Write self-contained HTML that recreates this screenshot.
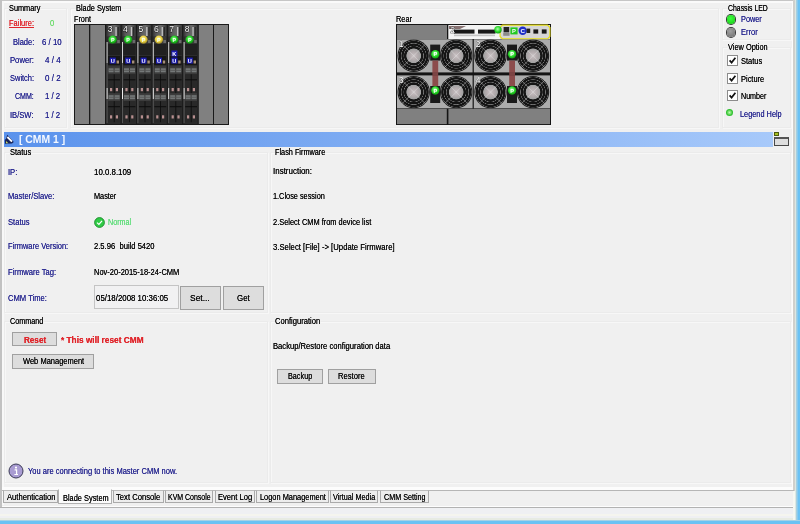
<!DOCTYPE html>
<html><head><meta charset="utf-8"><title>CMM 1</title>
<style>
html,body{margin:0;padding:0}
body{width:800px;height:524px;position:relative;overflow:hidden;background:#f0f0f0;font-family:"Liberation Sans",sans-serif;font-size:8.2px;letter-spacing:0;color:#0c0c0c;line-height:10px;}
.a{position:absolute;white-space:pre}
.t{position:absolute;white-space:pre;height:10px;line-height:10px;transform-origin:0 50%;text-shadow:0 0 0.25px}
.n{}
.b{color:#2c2c92}
.gb{position:absolute;box-sizing:border-box;border:1px solid #ebebeb;box-shadow:1px 1px 0 #f7f7f7, inset 1px 1px 0 #f7f7f7}
.btn{position:absolute;box-sizing:border-box;border:1px solid #a0a0a0;background:#dddddd;text-align:center;color:#1e1e1e}
.tab{position:absolute;box-sizing:border-box;top:490px;height:13px;border:1px solid #aaa;border-top-color:#bbb;background:#ededed;text-align:center;line-height:11px;color:#1e1e1e}
.cb{position:absolute;box-sizing:border-box;width:11px;height:11px;border:1px solid #8c8c8c;background:#fff}
</style></head><body>
<div class="a" style="left:0;top:0;width:800px;height:1.3px;background:#c6c6c6"></div>
<div class="a" style="left:0;top:0;width:2px;height:508px;background:#c2c2c2"></div>
<div class="a" style="left:2px;top:1.3px;width:791px;height:2px;background:#fafafa"></div>
<div class="a" style="left:2px;top:1px;width:2px;height:504px;background:#f8f8f8"></div>
<div class="a" style="left:0;top:508px;width:797px;height:13px;background:#eff0f3"></div>
<div class="a" style="left:0;top:514px;width:797px;height:1.6px;background:#f5f5ef"></div>
<div class="a" style="left:0;top:518.4px;width:797px;height:2.3px;background:#e7ebe3"></div>
<div class="a" style="left:0;top:507px;width:796px;height:1px;background:#b2b2b2"></div>
<div class="a" style="left:2px;top:505.5px;width:794px;height:1.5px;background:#fdfdfd"></div>
<div class="a" style="left:792px;top:1px;width:1.5px;height:489px;background:#fcfcfc"></div>
<div class="a" style="left:793px;top:0;width:2px;height:491px;background:#d0d0cc"></div>
<div class="a" style="left:793px;top:491px;width:2px;height:30px;background:#f6f8f2"></div>
<div class="a" style="left:795px;top:0;width:1px;height:521px;background:#dce8e3"></div>
<div class="a" style="left:796px;top:0;width:1px;height:524px;background:#a6cfe0"></div>
<div class="a" style="left:797px;top:0;width:1px;height:524px;background:#8acaee"></div>
<div class="a" style="left:798px;top:0;width:2px;height:524px;background:#6ac2f4"></div>
<div class="a" style="left:0;top:520px;width:800px;height:1px;background:#a6d2e6"></div>
<div class="a" style="left:0;top:521px;width:800px;height:3px;background:#6ac2f4"></div>
<div class="gb" style="left:4px;top:8px;width:63px;height:120px"></div>
<div class="gb" style="left:70px;top:8px;width:649px;height:120px"></div>
<div class="gb" style="left:722px;top:8px;width:69px;height:32px"></div>
<div class="gb" style="left:722px;top:47px;width:69px;height:81px"></div>
<div class="t " style="left:9px;top:3.5px;background:#f0f0f0;transform:scaleX(0.8935)">Summary</div>
<div class="t " style="left:8.5px;top:19.0px;color:#e0262c;text-decoration:underline;transform:scaleX(0.9153)">Failure:</div>
<div class="t n" style="left:50px;top:19.0px;color:#6fdc6f;transform:scaleX(0.93)">0</div>
<div class="t b" style="left:12.5px;top:38.0px;;transform:scaleX(0.9174)">Blade:</div>
<div class="t b" style="left:42.2px;top:38.0px;;transform:scaleX(0.961)">6 / 10</div>
<div class="t b" style="left:9.9px;top:56.0px;;transform:scaleX(0.9378)">Power:</div>
<div class="t b" style="left:44.6px;top:56.0px;;transform:scaleX(0.9788)">4 / 4</div>
<div class="t b" style="left:9.7px;top:74.0px;;transform:scaleX(0.9132)">Switch:</div>
<div class="t b" style="left:44.6px;top:74.0px;;transform:scaleX(0.9788)">0 / 2</div>
<div class="t b" style="left:15px;top:92.0px;;transform:scaleX(0.8613)">CMM:</div>
<div class="t b" style="left:45px;top:92.0px;;transform:scaleX(0.9537)">1 / 2</div>
<div class="t b" style="left:10.3px;top:111.0px;;transform:scaleX(0.9278)">IB/SW:</div>
<div class="t b" style="left:45px;top:111.0px;;transform:scaleX(0.9537)">1 / 2</div>
<div class="t " style="left:76px;top:3.5px;background:#f0f0f0;transform:scaleX(0.9007)">Blade System</div>
<div class="t " style="left:74px;top:15.0px;;transform:scaleX(0.8889)">Front</div>
<div class="t " style="left:395.5px;top:15.0px;;transform:scaleX(0.9014)">Rear</div>
<!-- FRONT -->
<svg width="155" height="101" viewBox="0 0 155 101" style="position:absolute;left:74px;top:24px;letter-spacing:0;will-change:transform" font-family="Liberation Sans, sans-serif"><defs><linearGradient id="bt" x1="0" x2="1"><stop offset="0" stop-color="#303030"/><stop offset=".25" stop-color="#585858"/><stop offset=".6" stop-color="#6a6a6a"/><stop offset="1" stop-color="#383838"/></linearGradient><radialGradient id="lg" cx=".45" cy=".4" r=".65"><stop offset="0" stop-color="#8dff8d"/><stop offset=".55" stop-color="#22c822"/><stop offset="1" stop-color="#0b6e0b"/></radialGradient><radialGradient id="ly" cx=".45" cy=".4" r=".65"><stop offset="0" stop-color="#fff8a8"/><stop offset=".55" stop-color="#e8cf40"/><stop offset="1" stop-color="#8a7820"/></radialGradient></defs><rect width="155" height="101" fill="#1a1a1a"/><rect x="1" y="1" width="14" height="99" fill="#808080"/><rect x="16.3" y="1" width="14.7" height="99" fill="#808080"/><rect x="124.8" y="1" width="14.2" height="99" fill="#808080"/><rect x="140" y="1" width="14.2" height="99" fill="#808080"/><g transform="translate(31.60,0)"><rect x="0.6" y="1" width="14.4" height="99" fill="#2c2c2c"/><rect x="0.8" y="1" width="14" height="11.5" fill="url(#bt)"/><rect x="9.8" y="3" width="1.3" height="9" fill="#c4c4c4"/><rect x="12" y="3" width="1.2" height="9" fill="#2a2a2a"/><rect x="2.4" y="12.5" width="12" height="7" fill="#3a3a3a"/><rect x="2.4" y="20" width="12" height="11" fill="#202020"/><rect x="2.4" y="32" width="12" height="9" fill="#161616"/><rect x="1" y="18" width="1" height="21" fill="#d0d0d0"/><rect x="1" y="64" width="1" height="11" fill="#eee"/><rect x="1" y="39" width="1" height="25" fill="#555"/><rect x="1" y="75" width="1" height="24" fill="#555"/><rect x="2.6" y="42.3" width="11.8" height="8" fill="#3c3c3c"/><rect x="3" y="44.3" width="5" height="4" fill="#747878"/><rect x="9" y="44.3" width="5" height="4" fill="#747878"/><rect x="3" y="45.9" width="11" height="0.8" fill="#555"/><rect x="2.6" y="50.3" width="11.8" height="21" fill="#292929"/><rect x="2.6" y="55.3" width="11.8" height="1" fill="#0c0c0c"/><rect x="8.2" y="50.3" width="0.8" height="21" fill="#0c0c0c"/><rect x="2.6" y="69.2" width="11.8" height="8" fill="#3c3c3c"/><rect x="3" y="71.2" width="5" height="4" fill="#747878"/><rect x="9" y="71.2" width="5" height="4" fill="#747878"/><rect x="3" y="72.8" width="11" height="0.8" fill="#555"/><rect x="2.6" y="77.2" width="11.8" height="21" fill="#292929"/><rect x="2.6" y="82.2" width="11.8" height="1" fill="#0c0c0c"/><rect x="8.2" y="77.2" width="0.8" height="21" fill="#0c0c0c"/><rect x="4.4" y="64" width="2.2" height="3.2" fill="#b89090"/><rect x="10.2" y="64" width="2.2" height="3.2" fill="#b89090"/><rect x="4.4" y="91.3" width="2.2" height="3.2" fill="#b89090"/><rect x="10.2" y="91.3" width="2.2" height="3.2" fill="#b89090"/><circle cx="7.1" cy="15.6" r="4.2" fill="url(#lg)"/><text x="7.1" y="17.6" font-size="5.4" font-weight="bold" fill="#f4fff4" text-anchor="middle">P</text><rect x="11.6" y="16" width="2.6" height="3" fill="#6a6a6a"/><rect x="4.2" y="33.6" width="6" height="6" fill="#1c1cb0"/><text x="7.2" y="38.7" font-size="5.6" font-weight="bold" fill="#fff" text-anchor="middle">U</text><rect x="11" y="36.5" width="2.4" height="3" fill="#a89078"/><text x="4.5" y="7.6" font-size="8.6" fill="#fff" stroke="#111" stroke-width="0.8" paint-order="stroke" text-anchor="middle">3</text></g><g transform="translate(47.00,0)"><rect x="0.6" y="1" width="14.4" height="99" fill="#2c2c2c"/><rect x="0.8" y="1" width="14" height="11.5" fill="url(#bt)"/><rect x="9.8" y="3" width="1.3" height="9" fill="#c4c4c4"/><rect x="12" y="3" width="1.2" height="9" fill="#2a2a2a"/><rect x="2.4" y="12.5" width="12" height="7" fill="#3a3a3a"/><rect x="2.4" y="20" width="12" height="11" fill="#202020"/><rect x="2.4" y="32" width="12" height="9" fill="#161616"/><rect x="1" y="18" width="1" height="21" fill="#d0d0d0"/><rect x="1" y="64" width="1" height="11" fill="#eee"/><rect x="1" y="39" width="1" height="25" fill="#555"/><rect x="1" y="75" width="1" height="24" fill="#555"/><rect x="2.6" y="42.3" width="11.8" height="8" fill="#3c3c3c"/><rect x="3" y="44.3" width="5" height="4" fill="#747878"/><rect x="9" y="44.3" width="5" height="4" fill="#747878"/><rect x="3" y="45.9" width="11" height="0.8" fill="#555"/><rect x="2.6" y="50.3" width="11.8" height="21" fill="#292929"/><rect x="2.6" y="55.3" width="11.8" height="1" fill="#0c0c0c"/><rect x="8.2" y="50.3" width="0.8" height="21" fill="#0c0c0c"/><rect x="2.6" y="69.2" width="11.8" height="8" fill="#3c3c3c"/><rect x="3" y="71.2" width="5" height="4" fill="#747878"/><rect x="9" y="71.2" width="5" height="4" fill="#747878"/><rect x="3" y="72.8" width="11" height="0.8" fill="#555"/><rect x="2.6" y="77.2" width="11.8" height="21" fill="#292929"/><rect x="2.6" y="82.2" width="11.8" height="1" fill="#0c0c0c"/><rect x="8.2" y="77.2" width="0.8" height="21" fill="#0c0c0c"/><rect x="4.4" y="64" width="2.2" height="3.2" fill="#b89090"/><rect x="10.2" y="64" width="2.2" height="3.2" fill="#b89090"/><rect x="4.4" y="91.3" width="2.2" height="3.2" fill="#b89090"/><rect x="10.2" y="91.3" width="2.2" height="3.2" fill="#b89090"/><circle cx="7.1" cy="15.6" r="4.2" fill="url(#lg)"/><text x="7.1" y="17.6" font-size="5.4" font-weight="bold" fill="#f4fff4" text-anchor="middle">P</text><rect x="11.6" y="16" width="2.6" height="3" fill="#6a6a6a"/><rect x="4.2" y="33.6" width="6" height="6" fill="#1c1cb0"/><text x="7.2" y="38.7" font-size="5.6" font-weight="bold" fill="#fff" text-anchor="middle">U</text><rect x="11" y="36.5" width="2.4" height="3" fill="#a89078"/><text x="4.5" y="7.6" font-size="8.6" fill="#fff" stroke="#111" stroke-width="0.8" paint-order="stroke" text-anchor="middle">4</text></g><g transform="translate(62.40,0)"><rect x="0.6" y="1" width="14.4" height="99" fill="#2c2c2c"/><rect x="0.8" y="1" width="14" height="11.5" fill="url(#bt)"/><rect x="9.8" y="3" width="1.3" height="9" fill="#c4c4c4"/><rect x="12" y="3" width="1.2" height="9" fill="#2a2a2a"/><rect x="2.4" y="12.5" width="12" height="7" fill="#3a3a3a"/><rect x="2.4" y="20" width="12" height="11" fill="#202020"/><rect x="2.4" y="32" width="12" height="9" fill="#161616"/><rect x="1" y="18" width="1" height="21" fill="#d0d0d0"/><rect x="1" y="64" width="1" height="11" fill="#eee"/><rect x="1" y="39" width="1" height="25" fill="#555"/><rect x="1" y="75" width="1" height="24" fill="#555"/><rect x="2.6" y="42.3" width="11.8" height="8" fill="#3c3c3c"/><rect x="3" y="44.3" width="5" height="4" fill="#747878"/><rect x="9" y="44.3" width="5" height="4" fill="#747878"/><rect x="3" y="45.9" width="11" height="0.8" fill="#555"/><rect x="2.6" y="50.3" width="11.8" height="21" fill="#292929"/><rect x="2.6" y="55.3" width="11.8" height="1" fill="#0c0c0c"/><rect x="8.2" y="50.3" width="0.8" height="21" fill="#0c0c0c"/><rect x="2.6" y="69.2" width="11.8" height="8" fill="#3c3c3c"/><rect x="3" y="71.2" width="5" height="4" fill="#747878"/><rect x="9" y="71.2" width="5" height="4" fill="#747878"/><rect x="3" y="72.8" width="11" height="0.8" fill="#555"/><rect x="2.6" y="77.2" width="11.8" height="21" fill="#292929"/><rect x="2.6" y="82.2" width="11.8" height="1" fill="#0c0c0c"/><rect x="8.2" y="77.2" width="0.8" height="21" fill="#0c0c0c"/><rect x="4.4" y="64" width="2.2" height="3.2" fill="#b89090"/><rect x="10.2" y="64" width="2.2" height="3.2" fill="#b89090"/><rect x="4.4" y="91.3" width="2.2" height="3.2" fill="#b89090"/><rect x="10.2" y="91.3" width="2.2" height="3.2" fill="#b89090"/><circle cx="7.1" cy="15.6" r="4.2" fill="url(#ly)"/><text x="7.1" y="17.6" font-size="5.4" font-weight="bold" fill="#f4fff4" text-anchor="middle">P</text><rect x="11.6" y="16" width="2.6" height="3" fill="#6a6a6a"/><rect x="4.2" y="33.6" width="6" height="6" fill="#1c1cb0"/><text x="7.2" y="38.7" font-size="5.6" font-weight="bold" fill="#fff" text-anchor="middle">U</text><rect x="11" y="36.5" width="2.4" height="3" fill="#a89078"/><text x="4.5" y="7.6" font-size="8.6" fill="#fff" stroke="#111" stroke-width="0.8" paint-order="stroke" text-anchor="middle">5</text></g><g transform="translate(77.80,0)"><rect x="0.6" y="1" width="14.4" height="99" fill="#2c2c2c"/><rect x="0.8" y="1" width="14" height="11.5" fill="url(#bt)"/><rect x="9.8" y="3" width="1.3" height="9" fill="#c4c4c4"/><rect x="12" y="3" width="1.2" height="9" fill="#2a2a2a"/><rect x="2.4" y="12.5" width="12" height="7" fill="#3a3a3a"/><rect x="2.4" y="20" width="12" height="11" fill="#202020"/><rect x="2.4" y="32" width="12" height="9" fill="#161616"/><rect x="1" y="18" width="1" height="21" fill="#d0d0d0"/><rect x="1" y="64" width="1" height="11" fill="#eee"/><rect x="1" y="39" width="1" height="25" fill="#555"/><rect x="1" y="75" width="1" height="24" fill="#555"/><rect x="2.6" y="42.3" width="11.8" height="8" fill="#3c3c3c"/><rect x="3" y="44.3" width="5" height="4" fill="#747878"/><rect x="9" y="44.3" width="5" height="4" fill="#747878"/><rect x="3" y="45.9" width="11" height="0.8" fill="#555"/><rect x="2.6" y="50.3" width="11.8" height="21" fill="#292929"/><rect x="2.6" y="55.3" width="11.8" height="1" fill="#0c0c0c"/><rect x="8.2" y="50.3" width="0.8" height="21" fill="#0c0c0c"/><rect x="2.6" y="69.2" width="11.8" height="8" fill="#3c3c3c"/><rect x="3" y="71.2" width="5" height="4" fill="#747878"/><rect x="9" y="71.2" width="5" height="4" fill="#747878"/><rect x="3" y="72.8" width="11" height="0.8" fill="#555"/><rect x="2.6" y="77.2" width="11.8" height="21" fill="#292929"/><rect x="2.6" y="82.2" width="11.8" height="1" fill="#0c0c0c"/><rect x="8.2" y="77.2" width="0.8" height="21" fill="#0c0c0c"/><rect x="4.4" y="64" width="2.2" height="3.2" fill="#b89090"/><rect x="10.2" y="64" width="2.2" height="3.2" fill="#b89090"/><rect x="4.4" y="91.3" width="2.2" height="3.2" fill="#b89090"/><rect x="10.2" y="91.3" width="2.2" height="3.2" fill="#b89090"/><circle cx="7.1" cy="15.6" r="4.2" fill="url(#ly)"/><text x="7.1" y="17.6" font-size="5.4" font-weight="bold" fill="#f4fff4" text-anchor="middle">P</text><rect x="11.6" y="16" width="2.6" height="3" fill="#6a6a6a"/><rect x="4.2" y="33.6" width="6" height="6" fill="#1c1cb0"/><text x="7.2" y="38.7" font-size="5.6" font-weight="bold" fill="#fff" text-anchor="middle">U</text><rect x="11" y="36.5" width="2.4" height="3" fill="#a89078"/><text x="4.5" y="7.6" font-size="8.6" fill="#fff" stroke="#111" stroke-width="0.8" paint-order="stroke" text-anchor="middle">6</text></g><g transform="translate(93.20,0)"><rect x="0.6" y="1" width="14.4" height="99" fill="#2c2c2c"/><rect x="0.8" y="1" width="14" height="11.5" fill="url(#bt)"/><rect x="9.8" y="3" width="1.3" height="9" fill="#c4c4c4"/><rect x="12" y="3" width="1.2" height="9" fill="#2a2a2a"/><rect x="2.4" y="12.5" width="12" height="7" fill="#3a3a3a"/><rect x="2.4" y="20" width="12" height="11" fill="#202020"/><rect x="2.4" y="32" width="12" height="9" fill="#161616"/><rect x="1" y="18" width="1" height="21" fill="#d0d0d0"/><rect x="1" y="64" width="1" height="11" fill="#eee"/><rect x="1" y="39" width="1" height="25" fill="#555"/><rect x="1" y="75" width="1" height="24" fill="#555"/><rect x="2.6" y="42.3" width="11.8" height="8" fill="#3c3c3c"/><rect x="3" y="44.3" width="5" height="4" fill="#747878"/><rect x="9" y="44.3" width="5" height="4" fill="#747878"/><rect x="3" y="45.9" width="11" height="0.8" fill="#555"/><rect x="2.6" y="50.3" width="11.8" height="21" fill="#292929"/><rect x="2.6" y="55.3" width="11.8" height="1" fill="#0c0c0c"/><rect x="8.2" y="50.3" width="0.8" height="21" fill="#0c0c0c"/><rect x="2.6" y="69.2" width="11.8" height="8" fill="#3c3c3c"/><rect x="3" y="71.2" width="5" height="4" fill="#747878"/><rect x="9" y="71.2" width="5" height="4" fill="#747878"/><rect x="3" y="72.8" width="11" height="0.8" fill="#555"/><rect x="2.6" y="77.2" width="11.8" height="21" fill="#292929"/><rect x="2.6" y="82.2" width="11.8" height="1" fill="#0c0c0c"/><rect x="8.2" y="77.2" width="0.8" height="21" fill="#0c0c0c"/><rect x="4.4" y="64" width="2.2" height="3.2" fill="#b89090"/><rect x="10.2" y="64" width="2.2" height="3.2" fill="#b89090"/><rect x="4.4" y="91.3" width="2.2" height="3.2" fill="#b89090"/><rect x="10.2" y="91.3" width="2.2" height="3.2" fill="#b89090"/><circle cx="7.1" cy="15.6" r="4.2" fill="url(#lg)"/><text x="7.1" y="17.6" font-size="5.4" font-weight="bold" fill="#f4fff4" text-anchor="middle">P</text><rect x="11.6" y="16" width="2.6" height="3" fill="#6a6a6a"/><rect x="4.2" y="33.6" width="6" height="6" fill="#1c1cb0"/><text x="7.2" y="38.7" font-size="5.6" font-weight="bold" fill="#fff" text-anchor="middle">U</text><rect x="11" y="36.5" width="2.4" height="3" fill="#a89078"/><rect x="4.2" y="26.5" width="6" height="6" fill="#1c1cb0"/><text x="7.2" y="31.6" font-size="5.6" font-weight="bold" fill="#fff" text-anchor="middle">K</text><text x="4.5" y="7.6" font-size="8.6" fill="#fff" stroke="#111" stroke-width="0.8" paint-order="stroke" text-anchor="middle">7</text></g><g transform="translate(108.60,0)"><rect x="0.6" y="1" width="14.4" height="99" fill="#2c2c2c"/><rect x="0.8" y="1" width="14" height="11.5" fill="url(#bt)"/><rect x="9.8" y="3" width="1.3" height="9" fill="#c4c4c4"/><rect x="12" y="3" width="1.2" height="9" fill="#2a2a2a"/><rect x="2.4" y="12.5" width="12" height="7" fill="#3a3a3a"/><rect x="2.4" y="20" width="12" height="11" fill="#202020"/><rect x="2.4" y="32" width="12" height="9" fill="#161616"/><rect x="1" y="18" width="1" height="21" fill="#d0d0d0"/><rect x="1" y="64" width="1" height="11" fill="#eee"/><rect x="1" y="39" width="1" height="25" fill="#555"/><rect x="1" y="75" width="1" height="24" fill="#555"/><rect x="2.6" y="42.3" width="11.8" height="8" fill="#3c3c3c"/><rect x="3" y="44.3" width="5" height="4" fill="#747878"/><rect x="9" y="44.3" width="5" height="4" fill="#747878"/><rect x="3" y="45.9" width="11" height="0.8" fill="#555"/><rect x="2.6" y="50.3" width="11.8" height="21" fill="#292929"/><rect x="2.6" y="55.3" width="11.8" height="1" fill="#0c0c0c"/><rect x="8.2" y="50.3" width="0.8" height="21" fill="#0c0c0c"/><rect x="2.6" y="69.2" width="11.8" height="8" fill="#3c3c3c"/><rect x="3" y="71.2" width="5" height="4" fill="#747878"/><rect x="9" y="71.2" width="5" height="4" fill="#747878"/><rect x="3" y="72.8" width="11" height="0.8" fill="#555"/><rect x="2.6" y="77.2" width="11.8" height="21" fill="#292929"/><rect x="2.6" y="82.2" width="11.8" height="1" fill="#0c0c0c"/><rect x="8.2" y="77.2" width="0.8" height="21" fill="#0c0c0c"/><rect x="4.4" y="64" width="2.2" height="3.2" fill="#b89090"/><rect x="10.2" y="64" width="2.2" height="3.2" fill="#b89090"/><rect x="4.4" y="91.3" width="2.2" height="3.2" fill="#b89090"/><rect x="10.2" y="91.3" width="2.2" height="3.2" fill="#b89090"/><circle cx="7.1" cy="15.6" r="4.2" fill="url(#lg)"/><text x="7.1" y="17.6" font-size="5.4" font-weight="bold" fill="#f4fff4" text-anchor="middle">P</text><rect x="11.6" y="16" width="2.6" height="3" fill="#6a6a6a"/><rect x="4.2" y="33.6" width="6" height="6" fill="#1c1cb0"/><text x="7.2" y="38.7" font-size="5.6" font-weight="bold" fill="#fff" text-anchor="middle">U</text><rect x="11" y="36.5" width="2.4" height="3" fill="#a89078"/><text x="4.5" y="7.6" font-size="8.6" fill="#fff" stroke="#111" stroke-width="0.8" paint-order="stroke" text-anchor="middle">8</text></g><rect x="0.5" y="0.5" width="154" height="100" fill="none" stroke="#1a1a1a"/></svg>
<!-- REAR -->
<svg width="155" height="101" viewBox="0 0 155 101" style="position:absolute;left:396px;top:24px;letter-spacing:0;will-change:transform" font-family="Liberation Sans, sans-serif"><defs><radialGradient id="fan" cx=".5" cy=".5" r=".5"><stop offset="0" stop-color="#cac2c4"/><stop offset=".25" stop-color="#b4acae"/><stop offset=".43" stop-color="#a2a2a2"/><stop offset=".47" stop-color="#161616"/><stop offset=".58" stop-color="#161616"/><stop offset=".61" stop-color="#7a7a7a"/><stop offset=".64" stop-color="#141414"/><stop offset=".74" stop-color="#141414"/><stop offset=".77" stop-color="#787878"/><stop offset=".80" stop-color="#141414"/><stop offset=".90" stop-color="#141414"/><stop offset=".93" stop-color="#6a6a6a"/><stop offset=".96" stop-color="#1c1c1c"/><stop offset="1" stop-color="#1c1c1c"/></radialGradient><radialGradient id="rg" cx=".45" cy=".4" r=".7"><stop offset="0" stop-color="#a8ffa8"/><stop offset=".55" stop-color="#24d424"/><stop offset="1" stop-color="#0a7a0a"/></radialGradient></defs><rect width="155" height="101" fill="#141414"/><rect x="1" y="1" width="50" height="14" fill="#808080"/><rect x="52.3" y="1" width="52" height="14" fill="#f4f4f4"/><rect x="58" y="5.6" width="20.5" height="4" fill="#181818"/><rect x="82" y="5.6" width="17.5" height="4" fill="#181818"/><rect x="58" y="10.6" width="41" height="1.6" fill="#c4c4c4"/><path d="M53 2 H70 L64 5 H53 Z" fill="#5a3a3a" opacity=".7"/><text x="56.5" y="9" font-size="8.5" fill="#fff" stroke="#222" stroke-width="0.7" paint-order="stroke" text-anchor="middle">2</text><rect x="104" y="1" width="50" height="14" fill="#d6d6d6"/><rect x="107.6" y="3" width="5.6" height="5.4" fill="#222"/><rect x="107.2" y="8.8" width="6.4" height="3" fill="#8c8c8c"/><rect x="114.4" y="3.4" width="7.2" height="7" fill="#22c822"/><text x="118" y="9.2" font-size="5.8" font-weight="bold" fill="#fff" text-anchor="middle">P</text><circle cx="126.7" cy="6.7" r="4.2" fill="#2030c8"/><text x="126.7" y="8.9" font-size="6.2" font-weight="bold" fill="#fff" text-anchor="middle">C</text><rect x="130.6" y="4.6" width="3.6" height="4.4" fill="#222"/><rect x="137.4" y="5.4" width="4.8" height="4.2" fill="#181818"/><rect x="145.8" y="5.4" width="4.8" height="4.2" fill="#181818"/><path d="M106.5 1.1 H151.5 L153.9 3.5 V12.5 L151.5 14.9 H106.5 L104.1 12.5 V3.5 Z" fill="none" stroke="#e6de18" stroke-width="1.2"/><circle cx="102" cy="5.8" r="3.7" fill="url(#rg)"/><g transform="translate(1,15.3)"><rect width="75.6" height="33.1" fill="#acacac"/><clipPath id="cp0"><rect width="75.6" height="33.1"/></clipPath><g clip-path="url(#cp0)"><circle cx="16.7" cy="16.5" r="16.2" fill="url(#fan)"/><path d="M4.699999999999999 4.5 L28.7 28.5 M28.7 4.5 L4.699999999999999 28.5" stroke="#e4e4e4" stroke-width="0.6" opacity=".75"/><circle cx="59.2" cy="16.5" r="16.2" fill="url(#fan)"/><path d="M47.2 4.5 L71.2 28.5 M71.2 4.5 L47.2 28.5" stroke="#e4e4e4" stroke-width="0.6" opacity=".75"/></g><rect x="33.2" y="5.3" width="10" height="16" fill="#1a1a1a"/><rect x="35.4" y="21.3" width="5.8" height="12" fill="#8c4c4c"/><circle cx="38.3" cy="15" r="4.2" fill="url(#rg)"/><text x="38.3" y="17.1" font-size="5.6" font-weight="bold" fill="#fff" text-anchor="middle">P</text><text x="4.2" y="8" font-size="8.5" fill="#fff" stroke="#444" stroke-width="0.5" paint-order="stroke" text-anchor="middle">1</text></g><g transform="translate(77.8,15.3)"><rect width="76.2" height="33.1" fill="#acacac"/><clipPath id="cp1"><rect width="76.2" height="33.1"/></clipPath><g clip-path="url(#cp1)"><circle cx="16.7" cy="16.5" r="16.2" fill="url(#fan)"/><path d="M4.699999999999999 4.5 L28.7 28.5 M28.7 4.5 L4.699999999999999 28.5" stroke="#e4e4e4" stroke-width="0.6" opacity=".75"/><circle cx="59.2" cy="16.5" r="16.2" fill="url(#fan)"/><path d="M47.2 4.5 L71.2 28.5 M71.2 4.5 L47.2 28.5" stroke="#e4e4e4" stroke-width="0.6" opacity=".75"/></g><rect x="33.2" y="5.3" width="10" height="16" fill="#1a1a1a"/><rect x="35.4" y="21.3" width="5.8" height="12" fill="#8c4c4c"/><circle cx="38.3" cy="15" r="4.2" fill="url(#rg)"/><text x="38.3" y="17.1" font-size="5.6" font-weight="bold" fill="#fff" text-anchor="middle">P</text><text x="4.2" y="8" font-size="8.5" fill="#fff" stroke="#444" stroke-width="0.5" paint-order="stroke" text-anchor="middle">2</text></g><g transform="translate(1,51.4)"><rect width="75.6" height="32.9" fill="#acacac"/><clipPath id="cp2"><rect width="75.6" height="32.9"/></clipPath><g clip-path="url(#cp2)"><circle cx="16.7" cy="16.7" r="16.2" fill="url(#fan)"/><path d="M4.699999999999999 4.699999999999999 L28.7 28.7 M28.7 4.699999999999999 L4.699999999999999 28.7" stroke="#e4e4e4" stroke-width="0.6" opacity=".75"/><circle cx="59.2" cy="16.7" r="16.2" fill="url(#fan)"/><path d="M47.2 4.699999999999999 L71.2 28.7 M71.2 4.699999999999999 L47.2 28.7" stroke="#e4e4e4" stroke-width="0.6" opacity=".75"/></g><rect x="35.4" y="0" width="5.8" height="11" fill="#8c4c4c"/><rect x="33.2" y="10.6" width="10" height="17" fill="#1a1a1a"/><circle cx="38.3" cy="15.1" r="4.2" fill="url(#rg)"/><text x="38.3" y="17.2" font-size="5.6" font-weight="bold" fill="#fff" text-anchor="middle">P</text><text x="4.2" y="8" font-size="8.5" fill="#fff" stroke="#444" stroke-width="0.5" paint-order="stroke" text-anchor="middle">3</text></g><g transform="translate(77.8,51.4)"><rect width="76.2" height="32.9" fill="#acacac"/><clipPath id="cp3"><rect width="76.2" height="32.9"/></clipPath><g clip-path="url(#cp3)"><circle cx="16.7" cy="16.7" r="16.2" fill="url(#fan)"/><path d="M4.699999999999999 4.699999999999999 L28.7 28.7 M28.7 4.699999999999999 L4.699999999999999 28.7" stroke="#e4e4e4" stroke-width="0.6" opacity=".75"/><circle cx="59.2" cy="16.7" r="16.2" fill="url(#fan)"/><path d="M47.2 4.699999999999999 L71.2 28.7 M71.2 4.699999999999999 L47.2 28.7" stroke="#e4e4e4" stroke-width="0.6" opacity=".75"/></g><rect x="35.4" y="0" width="5.8" height="11" fill="#8c4c4c"/><rect x="33.2" y="10.6" width="10" height="17" fill="#1a1a1a"/><circle cx="38.3" cy="15.1" r="4.2" fill="url(#rg)"/><text x="38.3" y="17.2" font-size="5.6" font-weight="bold" fill="#fff" text-anchor="middle">P</text><text x="4.2" y="8" font-size="8.5" fill="#fff" stroke="#444" stroke-width="0.5" paint-order="stroke" text-anchor="middle">4</text></g><rect x="36.4" y="48" width="5.8" height="4" fill="#7c4444"/><rect x="113.2" y="48" width="5.8" height="4" fill="#7c4444"/><rect x="1" y="84.8" width="49.8" height="15.3" fill="#808080"/><rect x="52.4" y="84.8" width="101.6" height="15.3" fill="#808080"/></svg>
<div class="t " style="left:727.5px;top:3.5px;background:#f0f0f0;transform:scaleX(0.8409)">Chassis LED</div>
<div class="a" style="left:726.8px;top:15.3px;width:8.4px;height:8.4px;border-radius:50%;background:radial-gradient(circle at 45% 40%,#3cff3c,#1fd61f 70%);box-shadow:0 0 0 1px #2c3c2c"></div>
<div class="t b" style="left:740.5px;top:14.5px;;transform:scaleX(0.8958)">Power</div>
<div class="a" style="left:726.8px;top:28.3px;width:8.4px;height:8.4px;border-radius:50%;background:radial-gradient(circle at 40% 35%,#a0a0a0,#7c7c7c 70%);box-shadow:0 0 0 1px #3a3a3a"></div>
<div class="t b" style="left:740.5px;top:28.0px;;transform:scaleX(0.9174)">Error</div>
<div class="t " style="left:727.5px;top:43.0px;background:#f0f0f0;transform:scaleX(0.9023)">View Option</div>
<div class="cb" style="left:727px;top:55px"><svg width="9" height="9" viewBox="0 0 9 9" style="position:absolute;left:0;top:0"><path d="M1.6 4.4 L3.6 6.6 L7.4 1.8" fill="none" stroke="#111" stroke-width="1.7"/></svg></div>
<div class="t " style="left:741px;top:56.5px;;transform:scaleX(0.9131)">Status</div>
<div class="cb" style="left:727px;top:73px"><svg width="9" height="9" viewBox="0 0 9 9" style="position:absolute;left:0;top:0"><path d="M1.6 4.4 L3.6 6.6 L7.4 1.8" fill="none" stroke="#111" stroke-width="1.7"/></svg></div>
<div class="t " style="left:741px;top:74.5px;;transform:scaleX(0.9104)">Picture</div>
<div class="cb" style="left:727px;top:90px"><svg width="9" height="9" viewBox="0 0 9 9" style="position:absolute;left:0;top:0"><path d="M1.6 4.4 L3.6 6.6 L7.4 1.8" fill="none" stroke="#111" stroke-width="1.7"/></svg></div>
<div class="t " style="left:741px;top:91.5px;;transform:scaleX(0.8687)">Number</div>
<div class="a" style="left:725.6px;top:109.1px;width:7.4px;height:7.4px;border-radius:50%;background:radial-gradient(circle at 50% 50%,#b8ffb0 0,#7be070 30%,#2fc22f 60%,#25b025 100%)"></div>
<div class="t b" style="left:739.5px;top:109.5px;;transform:scaleX(0.898)">Legend Help</div>
<div class="a" style="left:4px;top:132px;width:769px;height:14.7px;background:linear-gradient(90deg,#5a92ec,#a7c9fa)"></div>
<svg width="11" height="11" viewBox="0 0 11 11" style="position:absolute;left:4px;top:133.5px"><path d="M3.2 0.8 L9.8 8 L8 9.6 L1 9.8 L0.8 6 L2.2 4.4 Z" fill="#16235a"/><path d="M3.4 3 L8 7.6" stroke="#fff" stroke-width="1.8"/><path d="M2 7 L4.4 9.2 L2 9.3 Z" fill="#c8d860"/></svg>
<div class="a" style="left:18.5px;top:132px;height:15px;line-height:15px;font-size:10.4px;letter-spacing:0;font-weight:bold;color:#f4f8ff;will-change:transform">[ CMM 1 ]</div>
<div class="a" style="left:774.2px;top:131.5px;width:4.5px;height:4.5px;background:#a8c020;border:1px solid #4a5a10;box-sizing:border-box"></div>
<div class="a" style="left:774px;top:137px;width:15px;height:9.3px;background:#dedede;border:1px solid #484848;border-top:2px solid #555;box-sizing:border-box"></div>
<div class="gb" style="left:4px;top:152px;width:264px;height:161px"></div>
<div class="gb" style="left:270px;top:152px;width:521px;height:161px"></div>
<div class="gb" style="left:4px;top:321px;width:264px;height:162px"></div>
<div class="gb" style="left:270px;top:321px;width:521px;height:162px"></div>
<div class="t " style="left:10px;top:148.0px;background:#f0f0f0;transform:scaleX(0.9131)">Status</div>
<div class="t b" style="left:8px;top:167.5px;;transform:scaleX(0.93)">IP:</div>
<div class="t " style="left:94px;top:167.5px;;transform:scaleX(0.9612)">10.0.8.109</div>
<div class="t b" style="left:8px;top:192.3px;;transform:scaleX(0.9248)">Master/Slave:</div>
<div class="t " style="left:94px;top:192.3px;;transform:scaleX(0.8909)">Master</div>
<div class="t b" style="left:8px;top:217.5px;;transform:scaleX(0.93)">Status</div>
<svg width="11" height="11" viewBox="0 0 11 11" style="position:absolute;left:93.7px;top:216.7px"><circle cx="5.5" cy="5.5" r="4.9" fill="#2fcb45" stroke="#1d8a2c" stroke-width="0.9"/><path d="M3 5.6 L4.9 7.4 L8 3.8" fill="none" stroke="#fff" stroke-width="1.2"/></svg>
<div class="t " style="left:108px;top:217.5px;color:#5fdd7a;transform:scaleX(0.8791)">Normal</div>
<div class="t b" style="left:8px;top:242.3px;;transform:scaleX(0.9123)">Firmware Version:</div>
<div class="t " style="left:94px;top:242.3px;;transform:scaleX(0.9307)">2.5.96  build 5420</div>
<div class="t b" style="left:8px;top:267.5px;;transform:scaleX(0.932)">Firmware Tag:</div>
<div class="t " style="left:94px;top:267.5px;;transform:scaleX(0.9144)">Nov-20-2015-18-24-CMM</div>
<div class="t b" style="left:8px;top:293.5px;;transform:scaleX(0.93)">CMM Time:</div>
<div class="a" style="left:94px;top:285px;width:84.7px;height:24.3px;box-sizing:border-box;border:1px solid #c4c4c4;background:#f1f1f2"></div>
<div class="t " style="left:96px;top:293.5px;;transform:scaleX(0.9611)">05/18/2008 10:36:05</div>
<div class="btn" style="left:180px;top:286px;width:41px;height:24px"></div>
<div class="t " style="left:190px;top:293.5px;;transform:scaleX(1.0301)">Set...</div>
<div class="btn" style="left:223px;top:286px;width:41px;height:24px"></div>
<div class="t " style="left:237px;top:293.5px;;transform:scaleX(0.9619)">Get</div>
<div class="t " style="left:275px;top:148.0px;background:#f0f0f0;transform:scaleX(0.8915)">Flash Firmware</div>
<div class="t " style="left:273px;top:167.2px;;transform:scaleX(0.9739)">Instruction:</div>
<div class="t " style="left:273px;top:192.2px;;transform:scaleX(0.8962)">1.Close session</div>
<div class="t " style="left:273px;top:217.5px;;transform:scaleX(0.9068)">2.Select CMM from device list</div>
<div class="t " style="left:273px;top:243.0px;;transform:scaleX(0.9426)">3.Select [File] -&gt; [Update Firmware]</div>
<div class="t " style="left:10px;top:316.5px;background:#f0f0f0;transform:scaleX(0.8814)">Command</div>
<div class="btn" style="left:12.4px;top:331.6px;width:44.4px;height:14px"></div>
<div class="t " style="left:23.5px;top:334.5px;color:#e0262c;font-weight:bold;font-size:8.7px;transform:scaleX(0.9336)">Reset</div>
<div class="t " style="left:61px;top:334.5px;color:#e0262c;font-weight:bold;font-size:8.7px;transform:scaleX(0.9558)">* This will reset CMM</div>
<div class="btn" style="left:12.4px;top:354.4px;width:82px;height:14.3px"></div>
<div class="t " style="left:23px;top:357.0px;;transform:scaleX(0.9166)">Web Management</div>
<svg width="16" height="16" viewBox="0 0 16 16" style="position:absolute;left:8.4px;top:462.9px"><circle cx="8" cy="8" r="7" fill="#a99cd2" stroke="#3c3c58" stroke-width="1"/><circle cx="8" cy="4.6" r="1.1" fill="#fff"/><path d="M6.6 6.8 H8.6 V11.4 M6.4 11.5 H10" fill="none" stroke="#fff" stroke-width="1.2"/></svg>
<div class="t b" style="left:28px;top:466.8px;;transform:scaleX(0.9188)">You are connecting to this Master CMM now.</div>
<div class="t " style="left:275px;top:316.5px;background:#f0f0f0;transform:scaleX(0.9281)">Configuration</div>
<div class="t " style="left:273px;top:342.1px;;transform:scaleX(0.9329)">Backup/Restore configuration data</div>
<div class="btn" style="left:277.4px;top:369px;width:45.6px;height:14.6px"></div>
<div class="t " style="left:287.5px;top:371.9px;;transform:scaleX(0.886)">Backup</div>
<div class="btn" style="left:328px;top:369px;width:48px;height:14.6px"></div>
<div class="t " style="left:338px;top:371.9px;;transform:scaleX(0.9312)">Restore</div>
<div class="a" style="left:2px;top:486.7px;width:791px;height:3px;background:#fcfcfc"></div>
<div class="a" style="left:2px;top:489.7px;width:791.5px;height:1px;background:#b6b6b6"></div>
<div class="tab" style="left:3.3px;width:54.5px"></div>
<div class="t " style="left:7px;top:492.5px;;transform:scaleX(0.9344)">Authentication</div>
<div class="tab" style="left:113px;width:50.6px"></div>
<div class="t " style="left:116px;top:492.5px;;transform:scaleX(0.9336)">Text Console</div>
<div class="tab" style="left:164.5px;width:48.9px"></div>
<div class="t " style="left:167.8px;top:492.5px;;transform:scaleX(0.8509)">KVM Console</div>
<div class="tab" style="left:214.6px;width:40.2px"></div>
<div class="t " style="left:217.9px;top:492.5px;;transform:scaleX(0.9247)">Event Log</div>
<div class="tab" style="left:256px;width:72.6px"></div>
<div class="t " style="left:259.5px;top:492.5px;;transform:scaleX(0.9047)">Logon Management</div>
<div class="tab" style="left:330px;width:48.2px"></div>
<div class="t " style="left:333.2px;top:492.5px;;transform:scaleX(0.8879)">Virtual Media</div>
<div class="tab" style="left:379.6px;width:49.4px"></div>
<div class="t " style="left:383.6px;top:492.5px;;transform:scaleX(0.879)">CMM Setting</div>
<div class="tab" style="left:58.4px;width:54px;top:488.7px;height:15.8px;background:#fbfbfb;border-color:#b0b0b0;border-top-color:#fbfbfb"></div>
<div class="t " style="left:62.5px;top:493.5px;;transform:scaleX(0.9047)">Blade System</div>
</body></html>
